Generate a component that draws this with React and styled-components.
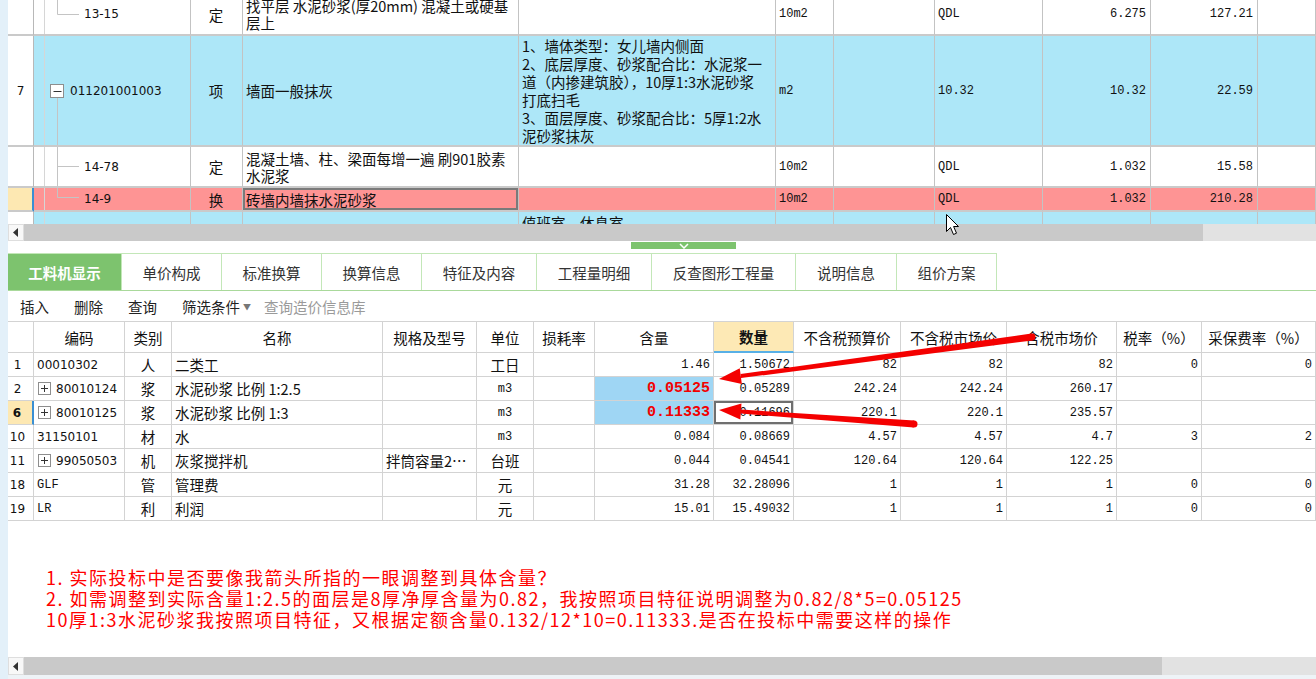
import React from 'react';
import styled, { createGlobalStyle } from 'styled-components';

const CJK = '"Noto Sans CJK SC", "Noto Sans", sans-serif';
const MONO = '"Liberation Mono", "Noto Sans CJK SC", monospace';
const SANS = '"DejaVu Sans", "Noto Sans CJK SC", sans-serif';

const GlobalStyle = createGlobalStyle`
  html, body { margin: 0; padding: 0; background: #fff; }
  body { font-family: ${CJK}; color: #111; }
  * { box-sizing: border-box; }
`;

const Screen = styled.div`
  position: relative;
  display: flex;
  width: 1316px;
  height: 679px;
  overflow: hidden;
  background: #fff;
`;

const Rail = styled.div`
  width: 8px;
  flex-shrink: 0;
  background: #e3f0f9;
`;

const Main = styled.div`
  flex: 1;
  min-width: 0;
  display: flex;
  flex-direction: column;
`;

/* ---------- upper grid ---------- */

const UpperPane = styled.div`
  height: 224px;
  flex-shrink: 0;
  overflow: hidden;
`;

const UpperList = styled.div`
  margin-top: -6px;
`;

const tones = { plain: '#ffffff', bill: '#ade7f8', hot: '#fe9494' };

const URow = styled.div`
  display: grid;
  grid-template-columns: 26px 157px 52px 276px 257px 58px 101px 108px 108px 107px 1fr;
  height: ${p => p.$h}px;
  background: ${p => tones[p.$tone]};
`;

const justify = a => (a === 'right' ? 'flex-end' : a === 'center' ? 'center' : 'flex-start');

const UCell = styled.div`
  border-right: 1px solid #c3c3c3;
  border-bottom: 2px solid #cacaca;
  display: flex;
  align-items: ${p => (p.$top ? 'flex-start' : 'center')};
  justify-content: ${p => justify(p.$align)};
  padding: ${p => (p.$top ? '2px 3px 0' : '0 4px 0 3px')};
  overflow: hidden;
  white-space: nowrap;
  font: ${p => (p.$mono ? `12px ${MONO}` : `14.5px/17px ${CJK}`)};
  box-shadow: ${p => (p.$focus ? 'inset 0 0 0 2px #7a7a7a' : 'none')};
`;

const UNum = styled(UCell)`
  justify-content: center;
  padding: 0;
  background: ${p => (p.$active ? '#fde8b2' : '#fff')};
  border-right: ${p => (p.$active ? '2px solid #3a8fd3' : '1px solid #b8b8b8')};
  font: 12px ${SANS};
`;

const UCode = styled(UCell)`
  padding: 0;
  align-items: stretch;
`;

const Indent = styled.div`
  width: 11px;
  flex-shrink: 0;
  border-right: 1px solid #d6d6d6;
`;

const TreeSvg = styled.svg`
  display: block;
  flex-shrink: 0;
`;

const CodeText = styled.span`
  align-self: center;
  margin-left: ${p => p.$gap}px;
  font: 12px ${SANS};
  color: #111;
`;

const Lines = styled.div`
  display: flex;
  flex-direction: column;
  line-height: ${p => p.$lh}px;
`;

const TreeMark = ({ kind, h, at }) => {
  if (kind === 'none') return <TreeSvg width="22" height={h} />;
  if (kind === 'parent') {
    return (
      <TreeSvg width="22" height={h}>
        <line x1="12.5" y1={at + 7} x2="12.5" y2={h} stroke="#c4c4c4" />
        <rect x="5.5" y={at - 6.5} width="13" height="13" fill="#fff" stroke="#8e8e8e" />
        <line x1="8.5" y1={at + 0.5} x2="16.5" y2={at + 0.5} stroke="#333" />
      </TreeSvg>
    );
  }
  return (
    <TreeSvg width="37" height={h}>
      <line x1="12.5" y1="0" x2="12.5" y2={kind === 'mid' ? h : at + 0.5} stroke="#c4c4c4" />
      <line x1="12.5" y1={at + 0.5} x2="34" y2={at + 0.5} stroke="#c4c4c4" />
    </TreeSvg>
  );
};

const upperRows = [
  {
    h: 42, tone: 'plain', tree: 'last', at: 20, code: '13-15', type: '定',
    name: ['找平层 水泥砂浆(厚20mm) 混凝土或硬基', '层上'], desc: [],
    unit: '10m2', src: 'QDL', qty: '6.275', price: '127.21',
  },
  {
    h: 111, tone: 'bill', num: '7', tree: 'parent', at: 55, code: '011201001003', type: '项',
    name: ['墙面一般抹灰'],
    desc: [
      '1、墙体类型：女儿墙内侧面',
      '2、底层厚度、砂浆配合比：水泥浆一',
      '道（内掺建筑胶），10厚1:3水泥砂浆',
      '打底扫毛',
      '3、面层厚度、砂浆配合比：5厚1:2水',
      '泥砂浆抹灰',
    ],
    unit: 'm2', src: '10.32', qty: '10.32', price: '22.59',
  },
  {
    h: 41, tone: 'plain', tree: 'mid', at: 19, code: '14-78', type: '定',
    name: ['混凝土墙、柱、梁面每增一遍 刷901胶素', '水泥浆'], desc: [],
    unit: '10m2', src: 'QDL', qty: '1.032', price: '15.58',
  },
  {
    h: 24, tone: 'hot', active: true, tree: 'last', at: 9, code: '14-9', type: '换',
    name: ['砖墙内墙抹水泥砂浆'], desc: [],
    unit: '10m2', src: 'QDL', qty: '1.032', price: '210.28',
  },
  {
    h: 24, tone: 'bill', tree: 'none', code: '', type: '', name: [], desc: ['值班室、休息室'], top: true,
  },
];

/* ---------- scrollbars, splitter ---------- */

const HScroll = styled.div`
  display: flex;
  height: ${p => p.$h}px;
  flex-shrink: 0;
  background: #e2e2e2;
`;

const ScrollBtn = styled.div`
  width: 16px;
  flex-shrink: 0;
  display: flex;
  align-items: center;
  justify-content: center;
  background: #f8f8f8;
  border: 1px solid #dedede;
`;

const Thumb = styled.div`
  width: ${p => p.$w}px;
  flex-shrink: 0;
  background: #c9c9c9;
`;

const ScrollBar = ({ h, thumb }) => (
  <HScroll $h={h}>
    <ScrollBtn>
      <svg width="6" height="9" viewBox="0 0 6 9">
        <polygon points="5,0 5,9 0,4.5" fill="#333" />
      </svg>
    </ScrollBtn>
    <Thumb $w={thumb} />
  </HScroll>
);

const Splitter = styled.div`
  height: 12px;
  flex-shrink: 0;
  padding: 1px 0 0 623px;
`;

const Grip = styled.div`
  width: 105px;
  height: 7px;
  background: #7dc36e;
  display: flex;
  align-items: center;
  justify-content: center;
`;

/* ---------- tabs & toolbar ---------- */

const TabBar = styled.div`
  display: flex;
  height: 38px;
  flex-shrink: 0;
  border-bottom: 1px solid #a9d99b;
`;

const Tab = styled.div`
  width: ${p => p.$w}px;
  display: flex;
  align-items: center;
  justify-content: center;
  border-top: 1px solid #c3e7b8;
  border-right: 1px solid #c3e7b8;
  background: ${p => (p.$on ? '#7dc36e' : '#fff')};
  color: ${p => (p.$on ? '#fff' : '#333')};
  font: ${p => (p.$on ? 700 : 400)} 14.5px ${CJK};
`;

const tabs = [
  ['工料机显示', 114], ['单价构成', 100], ['标准换算', 100], ['换算信息', 100],
  ['特征及内容', 115], ['工程量明细', 115], ['反查图形工程量', 144], ['说明信息', 101], ['组价方案', 100],
];

const Toolbar = styled.div`
  height: 30px;
  flex-shrink: 0;
  display: flex;
  align-items: center;
  padding-left: 12px;
  font: 14.5px ${CJK};
  color: #222;
`;

const Tool = styled.span`
  margin-right: ${p => p.$space ?? 25}px;
  color: ${p => (p.$dim ? '#9a9a9a' : '#222')};
  display: flex;
  align-items: center;
`;

const Caret = styled.span`
  margin-left: 3px;
  font-size: 8px;
  color: #777;
`;

/* ---------- lower grid ---------- */

const LowerGrid = styled.div`
  flex-shrink: 0;
  border-top: 1px solid #d3d3d3;
`;

const LRow = styled.div`
  display: grid;
  grid-template-columns: 26px 91px 47px 211px 94px 57px 61px 119px 80px 107px 106px 110px 85px 114px;
  height: ${p => p.$h}px;
`;

const fonts = {
  cjk: `14.5px ${CJK}`,
  mono: `12px ${MONO}`,
  sans: `12px ${SANS}`,
  hot: `700 15px ${MONO}`,
  head: `14.5px ${CJK}`,
  headBold: `700 14.5px ${CJK}`,
};

const LCell = styled.div`
  border-right: 1px solid #d3d3d3;
  border-bottom: ${p => (p.$under ? '2px solid #58b0e6' : '1px solid #d3d3d3')};
  display: flex;
  align-items: center;
  justify-content: ${p => justify(p.$align)};
  padding: 0 3px;
  overflow: hidden;
  white-space: nowrap;
  background: ${p => p.$bg || 'transparent'};
  color: ${p => (p.$red ? '#f20000' : '#111')};
  font: ${p => fonts[p.$font || 'cjk']};
  box-shadow: ${p => (p.$focus ? 'inset 0 0 0 2px #6f6f6f' : 'none')};
`;

const LNum = styled(LCell)`
  justify-content: center;
  padding: 0 6px 0 0;
  background: ${p => (p.$active ? '#fde8b2' : '#fff')};
  border-right: ${p => (p.$active ? '2px solid #3a8fd3' : '1px solid #d3d3d3')};
  font: ${p => (p.$active ? 700 : 400)} 12px ${SANS};
`;

const PlusBox = styled.svg`
  display: block;
  flex-shrink: 0;
  margin: 0 5px 0 1px;
`;

const Plus = () => (
  <PlusBox width="13" height="13" viewBox="0 0 13 13">
    <rect x="0.5" y="0.5" width="12" height="12" fill="#fff" stroke="#8e8e8e" />
    <line x1="3" y1="6.5" x2="10" y2="6.5" stroke="#333" />
    <line x1="6.5" y1="3" x2="6.5" y2="10" stroke="#333" />
  </PlusBox>
);

const heads = [
  '', '编码', '类别', '名称', '规格及型号', '单位', '损耗率', '含量', '数量',
  '不含税预算价', '不含税市场价', '含税市场价', '税率（%）', '采保费率（%）',
];

const items = [
  { no: '1', code: '00010302', kind: '人', name: '二类工', unit: '工日', amt: '1.46', qty: '1.50672', p1: '82', p2: '82', p3: '82', tax: '0', fee: '0' },
  { no: '2', plus: true, code: '80010124', kind: '浆', name: '水泥砂浆 比例 1:2.5', unit: 'm3', amt: '0.05125', hot: true, qty: '0.05289', p1: '242.24', p2: '242.24', p3: '260.17' },
  { no: '6', sel: true, plus: true, code: '80010125', kind: '浆', name: '水泥砂浆 比例 1:3', unit: 'm3', amt: '0.11333', hot: true, qty: '0.11696', p1: '220.1', p2: '220.1', p3: '235.57' },
  { no: '10', code: '31150101', kind: '材', name: '水', unit: 'm3', amt: '0.084', qty: '0.08669', p1: '4.57', p2: '4.57', p3: '4.7', tax: '3', fee: '2' },
  { no: '11', plus: true, code: '99050503', kind: '机', name: '灰浆搅拌机', spec: '拌筒容量2…', unit: '台班', amt: '0.044', qty: '0.04541', p1: '120.64', p2: '120.64', p3: '122.25' },
  { no: '18', code: 'GLF', kind: '管', name: '管理费', unit: '元', amt: '31.28', qty: '32.28096', p1: '1', p2: '1', p3: '1', tax: '0', fee: '0' },
  { no: '19', code: 'LR', kind: '利', name: '利润', unit: '元', amt: '15.01', qty: '15.49032', p1: '1', p2: '1', p3: '1', tax: '0', fee: '0' },
];

/* ---------- notes ---------- */

const Notes = styled.div`
  flex: 1;
  padding: 46px 0 0 38px;
  font: 18px/21px ${CJK};
  letter-spacing: 1.5px;
  color: #ff0000;
  white-space: nowrap;
`;

const BottomEdge = styled.div`
  height: 4px;
  flex-shrink: 0;
  background: #eef3f7;
`;

/* ---------- overlay (annotation arrows, mouse pointer) ---------- */

const Overlay = styled.svg`
  position: absolute;
  left: 0;
  top: 0;
  pointer-events: none;
`;

const App = () => (
  <>
    <GlobalStyle />
    <Screen>
      <Rail />
      <Main>
        <UpperPane>
          <UpperList>
            {upperRows.map((r, i) => (
              <URow key={i} $h={r.h} $tone={r.tone}>
                <UNum $active={r.active}>{r.num}</UNum>
                <UCode>
                  <Indent />
                  <TreeMark kind={r.tree} h={r.h - 2} at={r.at} />
                  <CodeText $gap={r.tree === 'parent' ? 3 : 2}>{r.code}</CodeText>
                </UCode>
                <UCell $align="center">{r.type}</UCell>
                <UCell $focus={r.active}>
                  <Lines $lh={17}>{r.name.map(t => <span key={t}>{t}</span>)}</Lines>
                </UCell>
                <UCell $top={r.top}>
                  <Lines $lh={18}>{r.desc.map(t => <span key={t}>{t}</span>)}</Lines>
                </UCell>
                <UCell $mono>{r.unit}</UCell>
                <UCell />
                <UCell $mono>{r.src}</UCell>
                <UCell $mono $align="right">{r.qty}</UCell>
                <UCell $mono $align="right">{r.price}</UCell>
                <UCell />
              </URow>
            ))}
          </UpperList>
        </UpperPane>

        <ScrollBar h={17} thumb={1179} />

        <Splitter>
          <Grip>
            <svg width="10" height="6" viewBox="0 0 10 6">
              <polyline points="1,1 5,5 9,1" fill="none" stroke="#fff" strokeWidth="1.5" />
            </svg>
          </Grip>
        </Splitter>

        <TabBar>
          {tabs.map(([t, w], i) => (
            <Tab key={t} $w={w} $on={i === 0}>{t}</Tab>
          ))}
        </TabBar>

        <Toolbar>
          <Tool>插入</Tool>
          <Tool>删除</Tool>
          <Tool>查询</Tool>
          <Tool $space={13}>筛选条件<Caret>▼</Caret></Tool>
          <Tool $dim>查询造价信息库</Tool>
        </Toolbar>

        <LowerGrid>
          <LRow $h={31}>
            {heads.map((h, i) => (
              <LCell
                key={i}
                $align="center"
                $font={i === 8 ? 'headBold' : 'head'}
                $bg={i === 8 ? '#fde9b5' : '#fff'}
                $under={i === 8}
              >
                {h}
              </LCell>
            ))}
          </LRow>
          {items.map(it => (
            <LRow key={it.no} $h={24}>
              <LNum $active={it.sel}>{it.no}</LNum>
              <LCell $font={/^[A-Z]+$/.test(it.code) ? 'mono' : 'sans'}>
                {it.plus && <Plus />}
                {it.code}
              </LCell>
              <LCell $align="center">{it.kind}</LCell>
              <LCell>{it.name}</LCell>
              <LCell>{it.spec}</LCell>
              <LCell $align="center" $font={/^[a-z0-9]+$/.test(it.unit) ? 'mono' : 'cjk'}>{it.unit}</LCell>
              <LCell />
              <LCell $align="right" $font={it.hot ? 'hot' : 'mono'} $red={it.hot} $bg={it.hot ? '#9fd6f4' : ''}>
                {it.amt}
              </LCell>
              <LCell $align="right" $font="mono" $focus={it.sel}>{it.qty}</LCell>
              <LCell $align="right" $font="mono">{it.p1}</LCell>
              <LCell $align="right" $font="mono">{it.p2}</LCell>
              <LCell $align="right" $font="mono">{it.p3}</LCell>
              <LCell $align="right" $font="mono">{it.tax}</LCell>
              <LCell $align="right" $font="mono">{it.fee}</LCell>
            </LRow>
          ))}
        </LowerGrid>

        <Notes>
          <div>1. 实际投标中是否要像我箭头所指的一眼调整到具体含量？</div>
          <div>2. 如需调整到实际含量1:2.5的面层是8厚净厚含量为0.82，我按照项目特征说明调整为0.82/8*5=0.05125</div>
          <div>10厚1:3水泥砂浆我按照项目特征，又根据定额含量0.132/12*10=0.11333.是否在投标中需要这样的操作</div>
        </Notes>

        <ScrollBar h={18} thumb={1138} />
        <BottomEdge />
      </Main>

      <Overlay width="1316" height="679" viewBox="0 0 1316 679">
        <g fill="#f40000">
          <polygon points="1032.47,340.47 741.07,378.08 740.53,374.12 1031.53,333.53" />
          <circle cx="1032" cy="337" r="3.5" />
          <polygon points="719,379 741.86,384.03 739.74,368.17" />
          <polygon points="913.75,427.49 740.76,413.59 741.04,409.61 914.25,420.51" />
          <circle cx="914" cy="424" r="3.5" />
          <polygon points="719,410 740.33,419.58 741.47,403.62" />
        </g>
        <path
          d="M946.5 214.5 L946.5 231.5 L950.5 227.5 L953.5 234.5 L956.5 233.2 L953.6 226.5 L958.5 226.5 Z"
          fill="#fff"
          stroke="#000"
          strokeWidth="1"
          strokeLinejoin="miter"
        />
      </Overlay>
    </Screen>
  </>
);

export default App;
